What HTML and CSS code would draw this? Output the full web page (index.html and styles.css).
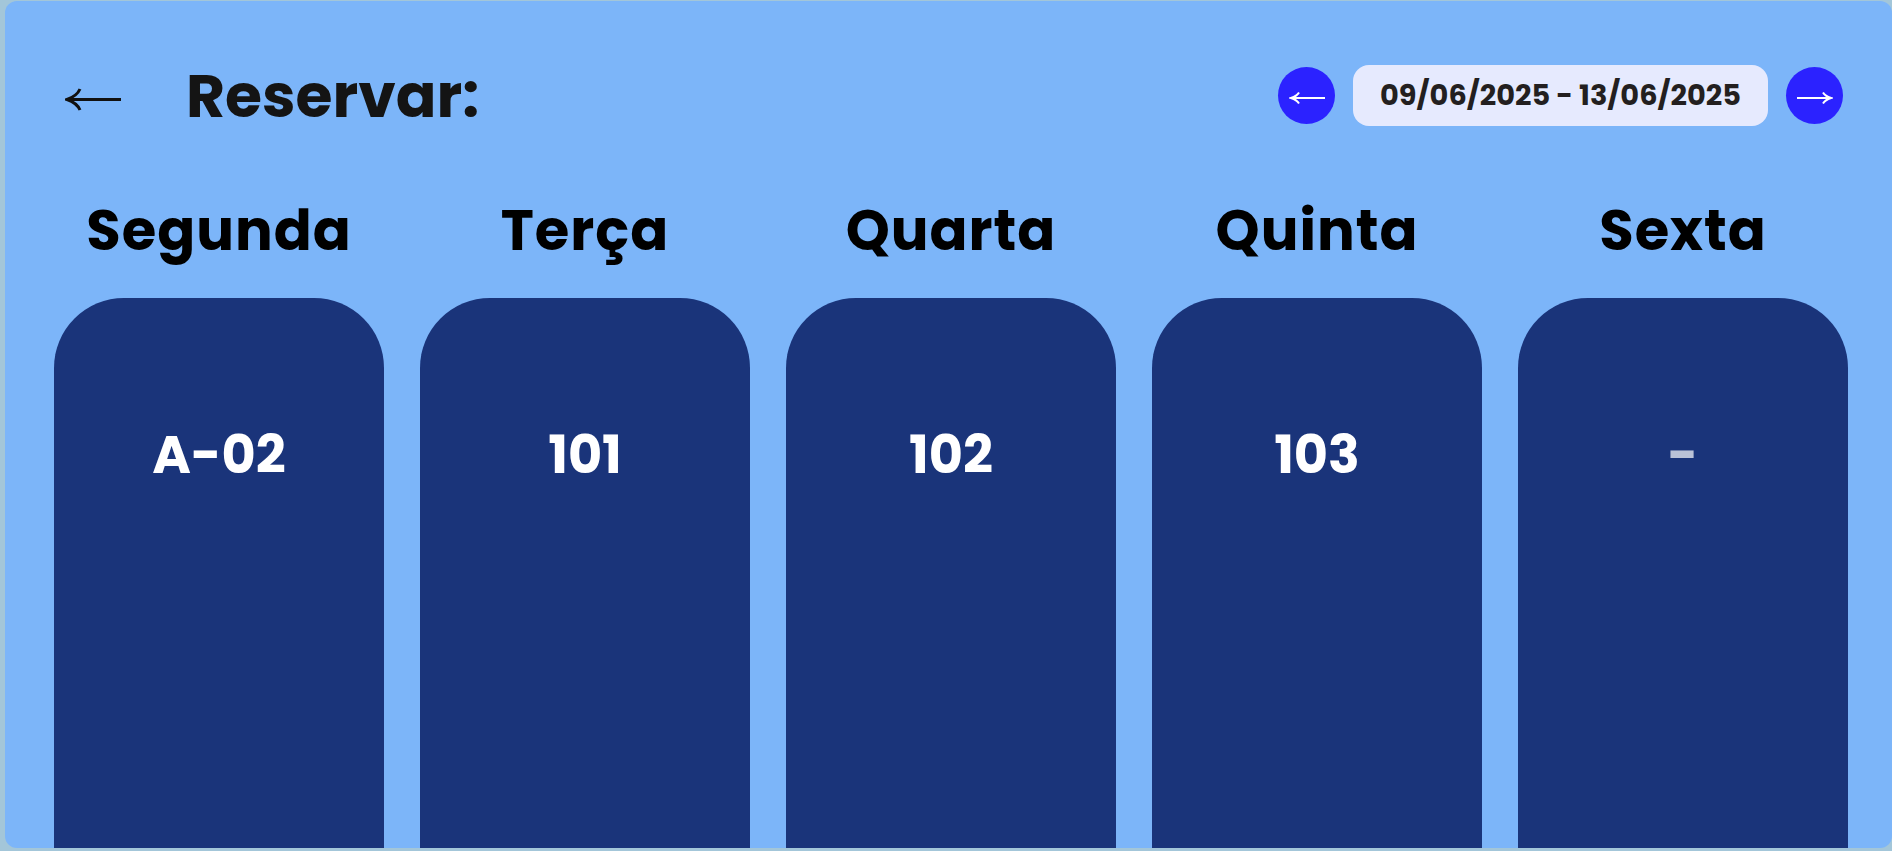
FILE: index.html
```html
<!DOCTYPE html>
<html lang="pt">
<head>
    <meta charset="UTF-8">
    <title>Reservar</title>
    <link rel="stylesheet" href="styles.css">
</head>
<body>
    <div class="panel">
        <header class="top">
            <div class="title-group">
                <svg class="back" viewBox="0 0 56 24" width="56" height="24">
                    <path d="M2 11.5H56M15 1Q12 8 2 11.5Q12 15 15 22"/>
                </svg>
                <h1>Reservar:</h1>
            </div>
            <div class="week-nav">
                <button class="nav-btn">
                    <svg viewBox="0 0 36 14" width="36" height="14"><path d="M2 7H36M10 1.5Q8 5 2 7Q8 9 10 12.5"/></svg>
                </button>
                <div class="week-label">09/06/2025 - 13/06/2025</div>
                <button class="nav-btn">
                    <svg viewBox="0 0 36 14" width="36" height="14"><path d="M0 7H34M26 1.5Q28 5 34 7Q28 9 26 12.5"/></svg>
                </button>
            </div>
        </header>
        <div class="days">
            <div class="day">
                <h2>Segunda</h2>
                <div class="card">A-02</div>
            </div>
            <div class="day">
                <h2>Terça</h2>
                <div class="card">101</div>
            </div>
            <div class="day">
                <h2>Quarta</h2>
                <div class="card">102</div>
            </div>
            <div class="day">
                <h2>Quinta</h2>
                <div class="card">103</div>
            </div>
            <div class="day">
                <h2>Sexta</h2>
                <div class="card empty">-</div>
            </div>
        </div>
    </div>
</body>
</html>
```

FILE: styles.css
```css
* {
    box-sizing: border-box;
}
html, body {
    height: 100%;
}
body {
    margin: 0;
    background-color: #a3c6d9;
    font-family: 'Poppins', 'Open Sans', 'Noto Sans', sans-serif;
    overflow: hidden;
}
.panel {
    height: 847px;
    margin: 1px 0 0 5px;
    padding: 39px 44px 0 49px;
    background-color: #7cb5f9;
    border-radius: 12px;
    overflow: hidden;
}
.top {
    display: flex;
    justify-content: space-between;
    align-items: center;
    height: 111px;
    padding-right: 5px;
}
.title-group {
    display: flex;
    align-items: center;
    gap: 65px;
    padding-left: 11px;
}
.back {
    margin-top: 9px;
    fill: none;
    stroke: #111;
    stroke-width: 3;
}
h1 {
    margin: 0;
    font-size: 60px;
    font-weight: 700;
    color: #141414;
}
.week-nav {
    display: flex;
    align-items: center;
    gap: 18px;
}
.nav-btn {
    display: flex;
    align-items: center;
    justify-content: center;
    width: 57px;
    height: 57px;
    border: none;
    border-radius: 50%;
    background: #2b22ff;
    padding: 5px 0 0;
}
.nav-btn svg {
    fill: none;
    stroke: white;
    stroke-width: 2;
}
.week-label {
    width: 415px;
    height: 61px;
    line-height: 61px;
    text-align: center;
    background: #e6eafe;
    border-radius: 16px;
    font-size: 28.8px;
    font-weight: 700;
    color: #231f20;
}
.days {
    display: grid;
    grid-template-columns: repeat(5, 330px);
    justify-content: space-between;
    margin-top: 42px;
}
h2 {
    margin: 0 0 29px;
    text-align: center;
    font-size: 56px;
    font-weight: 700;
    line-height: 76px;
    letter-spacing: 1px;
    color: #000;
}
.card {
    height: 600px;
    padding-top: 118px;
    text-align: center;
    background: #1a347a;
    border-radius: 70px 70px 0 0;
    color: white;
    font-size: 52.5px;
    font-weight: 700;
}
.card.empty {
    color: #bac2d7;
}
```
